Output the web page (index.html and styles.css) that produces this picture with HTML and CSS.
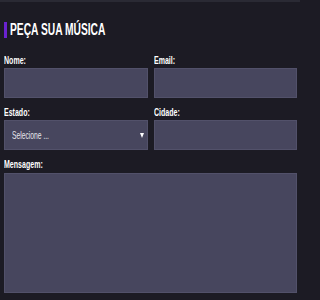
FILE: index.html
```html
<!DOCTYPE html>
<html lang="pt">
<head>
<meta charset="utf-8">
<title>Peça sua música</title>
<link rel="stylesheet" href="styles.css">
</head>
<body>
<section class="request">
  <h1 class="title"><span class="txt">PEÇA SUA MÚSICA</span></h1>
  <form class="form">
    <div class="grid">
      <div class="field">
        <label class="label"><span class="txt">Nome:</span></label>
        <div class="input"></div>
      </div>
      <div class="field">
        <label class="label"><span class="txt">Email:</span></label>
        <div class="input"></div>
      </div>
      <div class="field">
        <label class="label"><span class="txt">Estado:</span></label>
        <div class="input select"><span class="txt sel-text">Selecione ...</span><span class="arrow"></span></div>
      </div>
      <div class="field">
        <label class="label"><span class="txt">Cidade:</span></label>
        <div class="input"></div>
      </div>
    </div>
    <div class="field">
      <label class="label label-msg"><span class="txt">Mensagem:</span></label>
      <div class="input textarea"></div>
    </div>
  </form>
</section>
</body>
</html>
```
FILE: styles.css
```css
html, body {
  margin: 0;
  padding: 0;
  background: #1c1b24;
}
body {
  width: 300px;
  height: 300px;
  overflow: hidden;
  font-family: "Liberation Sans", Arial, sans-serif;
  color: #ffffff;
}
.request {
  border-top: 2px solid #2a2a34;
  padding: 20px 3px 0 4px;
}
.txt {
  display: inline-block;
  transform: scaleX(0.64);
  transform-origin: left center;
  white-space: nowrap;
}
.title {
  margin: 0 0 15px 0;
  font-size: 16px;
  line-height: 16px;
  font-weight: 700;
  color: #ffffff;
  border-left: 3px solid #6a22cf;
  padding: 0 0 0 3px;
  height: 16px;
}
.form {
  margin: 0;
}
.grid {
  display: grid;
  grid-template-columns: 1fr 1fr;
  column-gap: 6px;
}
.field {
  margin-bottom: 7px;
}
.label {
  display: block;
  font-size: 11px;
  line-height: 14px;
  font-weight: 700;
  margin-bottom: 1px;
  color: #ffffff;
}
.label-msg {
  margin-bottom: 2px;
}
.input {
  box-sizing: border-box;
  height: 30px;
  background: #47465e;
  border: 1px solid #52516a;
}
.select {
  display: flex;
  align-items: center;
  justify-content: space-between;
  padding: 0 3px 0 7px;
}
.sel-text {
  font-size: 10.5px;
  color: #e6e6ec;
}
.arrow {
  width: 0;
  height: 0;
  border-left: 2px solid transparent;
  border-right: 2px solid transparent;
  border-top: 5px solid #ffffff;
}
.textarea {
  height: 120px;
}
```
